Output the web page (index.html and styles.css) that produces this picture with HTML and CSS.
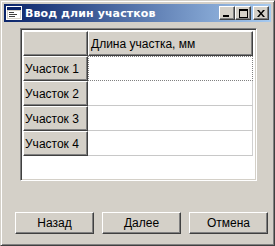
FILE: index.html
```html
<!DOCTYPE html>
<html>
<head>
<meta charset="utf-8">
<link rel="stylesheet" href="styles.css">
</head>
<body>
<div class="window">
  <div class="titlebar">
    <div class="title-left">
      <svg class="app-icon" width="16" height="14" viewBox="0 0 16 14">
        <rect x="0.5" y="0.5" width="15" height="13" fill="#d4d0c8" stroke="#fff"/>
        <rect x="1" y="1" width="14" height="3" fill="#0a246a"/>
        <rect x="2" y="5" width="12" height="7" fill="#fff"/>
        <rect x="3" y="6" width="5" height="1" fill="#404040"/>
        <rect x="3" y="8" width="8" height="1" fill="#404040"/>
        <rect x="3" y="10" width="6" height="1" fill="#404040"/>
      </svg>
      <span class="title">Ввод длин участков</span>
    </div>
    <div class="caption-btns">
      <div class="cbtn"><svg width="8" height="7" viewBox="0 0 8 7"><rect x="0" y="5" width="6" height="2" fill="#000"/></svg></div>
      <div class="cbtn"><svg width="9" height="9" viewBox="0 0 9 9"><rect x="0.5" y="0.5" width="8" height="8" fill="none" stroke="#000"/><rect x="0" y="0" width="9" height="2" fill="#000"/></svg></div>
      <div class="cbtn close"><svg width="8" height="7" viewBox="0 0 8 7"><path d="M0 0h2l2 2.5L6 0h2L5 3.5 8 7H6L4 4.5 2 7H0l3-3.5z" fill="#000"/></svg></div>
    </div>
  </div>
  <div class="content">
    <div class="grid">
      <div class="row head">
        <div class="hcell corner"></div>
        <div class="hcell colhead">Длина участка, мм</div>
      </div>
      <div class="row">
        <div class="hcell rowhead">Участок 1</div>
        <div class="dcell focus"></div>
      </div>
      <div class="row">
        <div class="hcell rowhead">Участок 2</div>
        <div class="dcell"></div>
      </div>
      <div class="row">
        <div class="hcell rowhead">Участок 3</div>
        <div class="dcell"></div>
      </div>
      <div class="row">
        <div class="hcell rowhead">Участок 4</div>
        <div class="dcell"></div>
      </div>
    </div>
    <div class="buttons">
      <button class="btn">Назад</button>
      <button class="btn">Далее</button>
      <button class="btn">Отмена</button>
    </div>
  </div>
</div>
</body>
</html>
```
FILE: styles.css
```css
html, body {
  margin: 0;
  padding: 0;
  background: #d4d0c8;
}
.window {
  width: 275px;
  height: 246px;
  box-sizing: border-box;
  background: #d4d0c8;
  border-top: 1px solid #d4d0c8;
  border-left: 1px solid #d4d0c8;
  border-right: 1px solid #404040;
  border-bottom: 1px solid #404040;
  box-shadow: inset 1px 1px 0 #fff, inset -1px -1px 0 #808080;
  padding: 3px 3px 3px 3px;
  font-family: "Liberation Sans", Arial, sans-serif;
  font-size: 12px;
  color: #000;
  display: flex;
  flex-direction: column;
}
.titlebar {
  height: 18px;
  background: linear-gradient(to right, #0a246a, #a6caf0);
  display: flex;
  align-items: center;
  justify-content: space-between;
  padding: 0 2px 0 2px;
}
.title-left {
  display: flex;
  align-items: center;
  gap: 3px;
}
.app-icon { display: block; }
.title {
  color: #fff;
  font-weight: bold;
  font-size: 11px;
  font-family: "DejaVu Sans", "Liberation Sans", sans-serif;
  letter-spacing: 0.1px;
}
.caption-btns {
  display: flex;
  align-items: center;
}
.cbtn {
  width: 16px;
  height: 14px;
  box-sizing: border-box;
  background: #d4d0c8;
  border-top: 1px solid #fff;
  border-left: 1px solid #fff;
  border-right: 1px solid #404040;
  border-bottom: 1px solid #404040;
  box-shadow: inset -1px -1px 0 #808080;
  display: flex;
  align-items: center;
  justify-content: center;
}
.cbtn.close { margin-left: 2px; }
.content {
  flex: 1;
  display: flex;
  flex-direction: column;
  padding: 6px 14px 0 16px;
}
.grid {
  height: 153px;
  box-sizing: border-box;
  background: #fff;
  border-top: 1px solid #808080;
  border-left: 1px solid #808080;
  border-right: 1px solid #fff;
  border-bottom: 1px solid #fff;
  box-shadow: inset 1px 1px 0 #404040, inset -1px -1px 0 #d4d0c8;
  padding: 2px 3px 0 2px;
}
.row {
  display: flex;
  height: 25px;
}
.hcell {
  box-sizing: border-box;
  background: #d4d0c8;
  border-top: 1px solid #fff;
  border-left: 1px solid #fff;
  border-right: 1px solid #404040;
  border-bottom: 1px solid #404040;
  box-shadow: inset -1px -1px 0 #808080;
  display: flex;
  align-items: center;
  padding-left: 1px;
  white-space: nowrap;
}
.corner, .rowhead { width: 65px; }
.colhead { flex: 1; padding-left: 2px; }
.dcell {
  flex: 1;
  box-sizing: border-box;
  border-right: 1px solid #d0d0d0;
  border-bottom: 1px solid #c8c8c8;
  background: #fff;
}
.dcell.focus {
  border: 1px dotted #808080;
}
.buttons {
  margin-top: 31px;
  margin-left: -5px;
  margin-right: -11px;
  display: flex;
  gap: 8px;
}
.btn {
  width: 80px;
  height: 22px;
  box-sizing: border-box;
  background: #d4d0c8;
  border-top: 1px solid #fff;
  border-left: 1px solid #fff;
  border-right: 1px solid #404040;
  border-bottom: 1px solid #404040;
  box-shadow: inset -1px -1px 0 #808080;
  font-family: "Liberation Sans", Arial, sans-serif;
  font-size: 12px;
  color: #000;
  padding: 0;
}
```
